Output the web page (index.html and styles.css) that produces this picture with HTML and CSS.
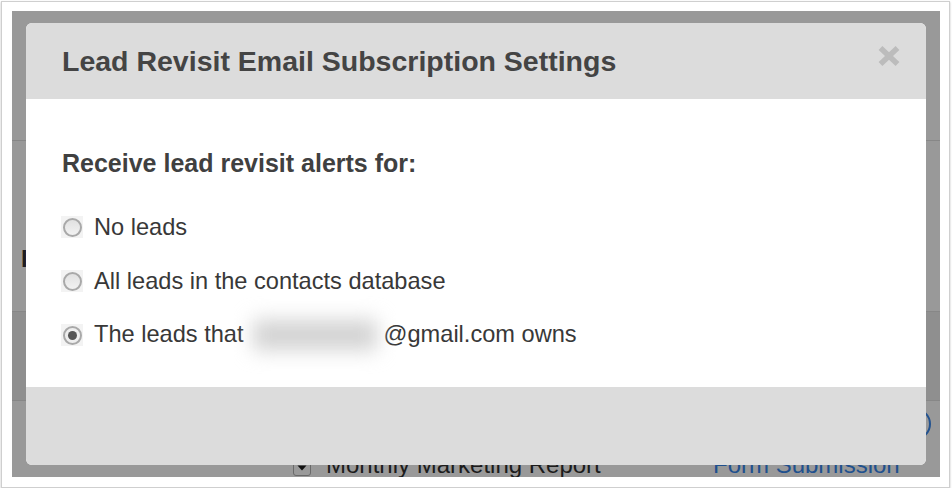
FILE: index.html
```html
<!DOCTYPE html>
<html lang="en">
<head>
<meta charset="utf-8">
<title>Lead Revisit Email Subscription Settings</title>
<link rel="stylesheet" href="styles.css">
</head>
<body>
<div class="shot">
  <div class="page">
    <div class="bg-row bg-row1"></div>
    <div class="bg-row bg-row2"><span class="bg-label">I</span></div>
    <div class="bg-row bg-row3"></div>
    <div class="bg-row4">
      <div class="bg-icon-line"><span class="bg-circle"></span></div>
      <div class="bg-item">
        <div class="bg-cell">
          <span class="bg-check"><svg width="12" height="10" viewBox="0 0 12 10"><path d="M1.5 3.5 L10.5 3.5 L6 8.5 Z" fill="#111"/></svg></span>
          <span class="bg-text">Monthly Marketing Report</span>
        </div>
        <div class="bg-cell"><span class="bg-link">Form Submission</span></div>
      </div>
    </div>

    <div class="modal">
      <div class="modal-header">
        <h1 class="modal-title">Lead Revisit Email Subscription Settings</h1>
        <svg class="close" width="24" height="22" viewBox="0 0 24 22"><path d="M3.5 3 L20.5 19 M20.5 3 L3.5 19" stroke="#bcbcbc" stroke-width="5.5" fill="none"/></svg>
      </div>
      <div class="modal-body">
        <h2 class="question">Receive lead revisit alerts for:</h2>
        <div class="options">
          <label class="option"><span class="radio"><span class="radio-circle"></span></span><span class="option-text">No leads</span></label>
          <label class="option"><span class="radio"><span class="radio-circle"></span></span><span class="option-text">All leads in the contacts database</span></label>
          <label class="option"><span class="radio"><span class="radio-circle checked"><span class="radio-dot"></span></span></span><span class="option-text">The leads that<span class="redact"></span>@gmail.com owns</span></label>
        </div>
      </div>
      <div class="modal-footer"></div>
    </div>
  </div>
</div>
</body>
</html>
```

FILE: styles.css
```css
html, body {
  margin: 0;
  padding: 0;
  background: #ffffff;
}

.shot {
  box-sizing: border-box;
  width: 949px;
  height: 487px;
  margin: 1px 0 0 1px;
  border: 1px solid #cfcfcf;
  box-shadow: 0 1px 2px rgba(0, 0, 0, 0.25);
  padding: 9px 9px 10px 10px;
  background: #ffffff;
}

.page {
  position: relative;
  width: 928px;
  height: 466px;
  background: #999999;
  overflow: hidden;
  font-family: "Liberation Sans", Arial, Helvetica, sans-serif;
}

.bg-row {
  border-bottom: 1px solid #878787;
}

.bg-row1 {
  height: 129px;
}

.bg-row2 {
  box-sizing: border-box;
  height: 171px;
  padding: 106px 0 0 9px;
}

.bg-label {
  font-size: 24px;
  line-height: 24px;
  font-weight: bold;
  color: #1e1e1e;
}

.bg-row3 {
  height: 88px;
  background: #8f8f8f;
}

.bg-row4 {
  padding-top: 7px;
}

.bg-icon-line {
  display: flex;
  justify-content: flex-end;
  padding-right: 9px;
}

.bg-circle {
  box-sizing: border-box;
  width: 32px;
  height: 32px;
  border: 2.5px solid #22528f;
  border-radius: 50%;
}

.bg-item {
  display: grid;
  grid-template-columns: 420px auto;
  padding-left: 281px;
  margin-top: 13px;
  font-size: 24px;
  line-height: 24px;
}

.bg-cell {
  display: flex;
  align-items: center;
}

.bg-check {
  box-sizing: border-box;
  width: 18px;
  height: 18px;
  margin-top: 3px;
  border: 1px solid #6a6a6a;
  border-radius: 3px;
  background: #9a9a9a;
  display: flex;
  align-items: center;
  justify-content: center;
}

.bg-text {
  margin-left: 15px;
  color: #1c1c1c;
}

.bg-link {
  color: #20508e;
}

.modal {
  position: absolute;
  left: 14px;
  top: 12px;
  width: 900px;
  height: 442px;
  border-radius: 6px;
  overflow: hidden;
  display: flex;
  flex-direction: column;
  background: #ffffff;
}

.modal-header {
  box-sizing: border-box;
  height: 76px;
  flex: none;
  background: #dcdcdc;
  padding: 24px 25px 0 36px;
  display: flex;
  justify-content: space-between;
  align-items: flex-start;
}

.modal-title {
  margin: 0;
  font-size: 28.5px;
  line-height: 28px;
  font-weight: bold;
  color: #444444;
}

.close {
  margin-top: -2px;
}

.modal-body {
  box-sizing: border-box;
  height: 288px;
  flex: none;
  padding: 52px 35px 0 36px;
  background: #ffffff;
}

.question {
  margin: 0;
  font-size: 25px;
  line-height: 24px;
  font-weight: bold;
  color: #404040;
}

.options {
  margin-top: 38px;
  display: flex;
  flex-direction: column;
  gap: 26px;
}

.option {
  display: flex;
  align-items: center;
  height: 28px;
  font-size: 23.6px;
  line-height: 28px;
  color: #383838;
}

.radio {
  width: 22px;
  height: 22px;
  margin-left: -1px;
  background: #f3f3f3;
  display: flex;
  align-items: center;
  justify-content: center;
  flex: none;
}

.radio-circle {
  box-sizing: border-box;
  width: 19px;
  height: 19px;
  border-radius: 50%;
  border: 2px solid #a9a9a9;
  background: linear-gradient(#e1e1e1, #f2f2f2);
  display: flex;
  align-items: center;
  justify-content: center;
}

.radio-circle.checked {
  background: #eeeeee;
}

.radio-dot {
  width: 9px;
  height: 9px;
  border-radius: 50%;
  background: #555555;
}

.option-text {
  margin-left: 11px;
  white-space: nowrap;
}

.redact {
  display: inline-block;
  width: 124px;
  height: 30px;
  margin: 0 7px 0 9px;
  vertical-align: middle;
  background: #d2d2d2;
  filter: blur(10px);
}

.modal-footer {
  flex: 1;
  background: #dcdcdc;
}
```
